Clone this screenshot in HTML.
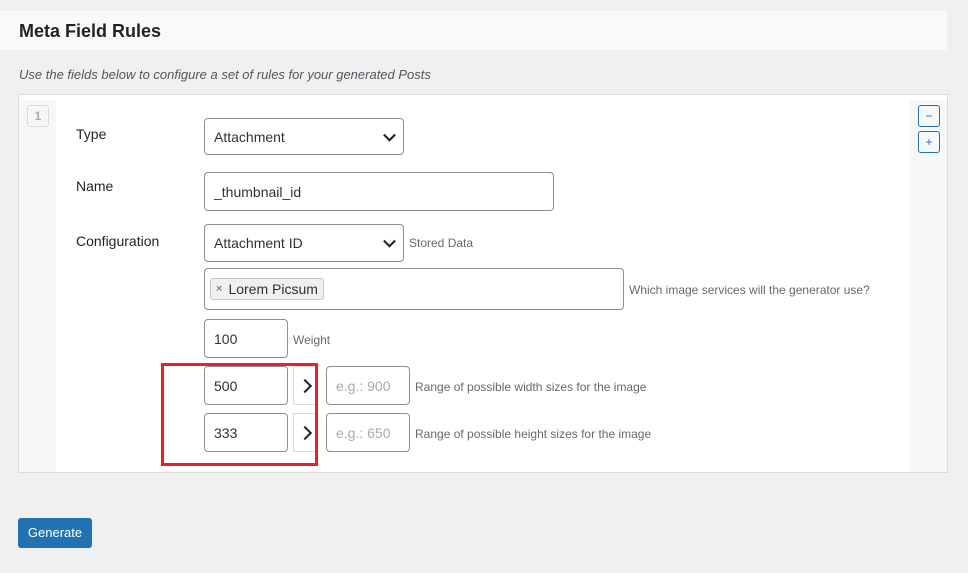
<!DOCTYPE html>
<html><head><style>
*{box-sizing:border-box;margin:0;padding:0}
body{width:968px;height:573px;background:#f0f0f1;font-family:"Liberation Sans",sans-serif;color:#1d2327;position:relative;overflow:hidden;font-size:14px}
.a{position:absolute}
.inp{position:absolute;background:#fff;border:1px solid #8c8f94;border-radius:4px;padding-left:9px;display:flex;align-items:center;font-size:14px;color:#2c3338}
.hint{position:absolute;font-size:12px;color:#646970}
.lbl{position:absolute;left:76px;font-size:14px;color:#1d2327}
.chev{position:absolute;right:9px;top:50%;width:9px;height:9px;border-right:2px solid #1d2327;border-bottom:2px solid #1d2327;transform:translateY(-70%) rotate(45deg)}
.arr{position:absolute;width:24px;height:39px;border:1px solid #dcdcde;background:#fff}
.arr:after{content:"";position:absolute;left:6px;top:14px;width:8px;height:8px;border-right:2px solid #1d2327;border-top:2px solid #1d2327;transform:rotate(45deg)}
.btn{position:absolute;width:22px;height:22px;border:1px solid #2271b1;border-radius:3px;background:#f6f7f7;color:#2271b1;font-size:12px;display:flex;align-items:center;justify-content:center}
</style></head><body>
<div class="a" style="left:0;top:11px;width:947px;height:39px;background:#f9f9f9"></div>
<div class="a" style="left:19px;top:21px;font-size:18px;font-weight:bold">Meta Field Rules</div>
<div class="a" style="left:19px;top:67px;font-size:13px;font-style:italic;color:#50575e">Use the fields below to configure a set of rules for your generated Posts</div>
<div class="a" style="left:18px;top:94px;width:930px;height:379px;background:#f6f7f7;border:1px solid #dcdcde"></div>
<div class="a" style="left:19px;top:95px;width:928px;height:5px;background:#fff"></div>
<div class="a" style="left:56px;top:100px;width:854px;height:372px;background:#fff"></div>
<div class="a" style="left:27px;top:105px;width:22px;height:22px;border:1px solid #dcdcde;border-radius:3px;color:#a7aaad;font-size:12px;font-weight:bold;text-align:center;line-height:20px">1</div>
<div class="btn" style="left:918px;top:105px">−</div>
<div class="btn" style="left:918px;top:131px">+</div>
<div class="lbl" style="top:126px">Type</div>
<div class="lbl" style="top:178px">Name</div>
<div class="lbl" style="top:233px">Configuration</div>
<div class="inp" style="left:204px;top:118px;width:200px;height:37px">Attachment<span class="chev"></span></div>
<div class="inp" style="left:204px;top:172px;width:350px;height:39px">_thumbnail_id</div>
<div class="inp" style="left:204px;top:224px;width:200px;height:38px">Attachment ID<span class="chev"></span></div>
<div class="hint" style="left:409px;top:236px">Stored Data</div>
<div class="inp" style="left:204px;top:268px;width:420px;height:42px;padding-left:5px"><div style="border:1px solid #c3c4c7;background:#f0f0f1;border-radius:3px;height:22px;padding:0 5px;display:flex;align-items:center;font-size:14px;color:#2c3338"><span style="color:#888;font-size:11px;margin-right:6px;font-weight:bold">×</span>Lorem Picsum</div></div>
<div class="hint" style="left:629px;top:283px">Which image services will the generator use?</div>
<div class="inp" style="left:204px;top:319px;width:84px;height:39px">100</div>
<div class="hint" style="left:293px;top:333px">Weight</div>
<div class="inp" style="left:204px;top:366px;width:84px;height:39px">500</div>
<div class="arr" style="left:293px;top:366px"></div>
<div class="inp" style="left:326px;top:366px;width:84px;height:39px;color:#a7aaad">e.g.: 900</div>
<div class="hint" style="left:415px;top:380px">Range of possible width sizes for the image</div>
<div class="inp" style="left:204px;top:413px;width:84px;height:39px">333</div>
<div class="arr" style="left:293px;top:413px"></div>
<div class="inp" style="left:326px;top:413px;width:84px;height:39px;color:#a7aaad">e.g.: 650</div>
<div class="hint" style="left:415px;top:427px">Range of possible height sizes for the image</div>
<div class="a" style="left:161px;top:363px;width:157px;height:103px;border:3px solid #e8202a"></div>
<div class="a" style="left:18px;top:518px;width:74px;height:30px;background:#2271b1;border-radius:3px;color:#fff;font-size:13px;text-align:center;line-height:30px">Generate</div>
</body></html>
